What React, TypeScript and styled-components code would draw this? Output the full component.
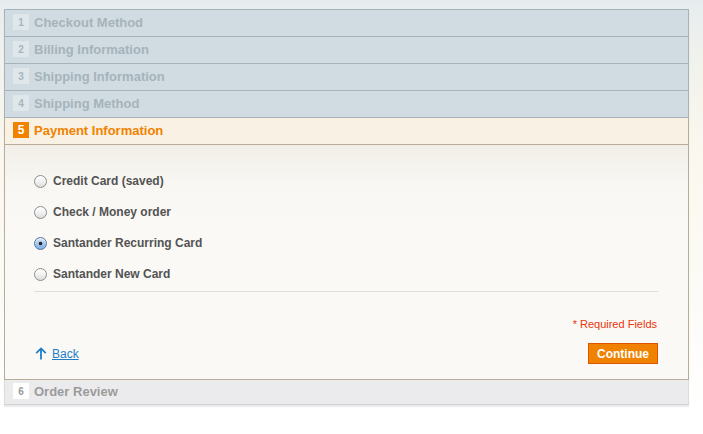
import React, { useState } from 'react'
import styled, { createGlobalStyle, css } from 'styled-components'

type Variant = 'done' | 'active' | 'pending'

const steps: { n: number; title: string; variant: Variant }[] = [
  { n: 1, title: 'Checkout Method', variant: 'done' },
  { n: 2, title: 'Billing Information', variant: 'done' },
  { n: 3, title: 'Shipping Information', variant: 'done' },
  { n: 4, title: 'Shipping Method', variant: 'done' },
  { n: 5, title: 'Payment Information', variant: 'active' },
  { n: 6, title: 'Order Review', variant: 'pending' },
]

const methods = [
  'Credit Card (saved)',
  'Check / Money order',
  'Santander Recurring Card',
  'Santander New Card',
]

export default function App() {
  const [method, setMethod] = useState(methods[2])

  return (
    <>
      <GlobalStyle />
      <Page>
        <Checkout>
          {steps.map((step) => (
            <Section key={step.n} variant={step.variant}>
              <StepHeader variant={step.variant}>
                <StepNumber variant={step.variant}>{step.n}</StepNumber>
                <StepTitle variant={step.variant}>{step.title}</StepTitle>
              </StepHeader>
              {step.variant === 'active' && (
                <StepBody>
                  <MethodList>
                    {methods.map((m) => (
                      <MethodItem key={m}>
                        <Radio
                          type="radio"
                          name="payment"
                          checked={method === m}
                          onChange={() => setMethod(m)}
                        />
                        <MethodLabel>{m}</MethodLabel>
                      </MethodItem>
                    ))}
                  </MethodList>
                  <Footer>
                    <Required>* Required Fields</Required>
                    <Actions>
                      <BackLink href="#">
                        <svg width="12" height="13" viewBox="0 0 12 13">
                          <path
                            d="M6 12.5V1.5M1.2 6.2L6 1.4l4.8 4.8"
                            fill="none"
                            stroke="#1e7ec8"
                            strokeWidth="1.8"
                          />
                        </svg>
                        <span>Back</span>
                      </BackLink>
                      <ContinueButton>Continue</ContinueButton>
                    </Actions>
                  </Footer>
                </StepBody>
              )}
            </Section>
          ))}
        </Checkout>
      </Page>
    </>
  )
}

const GlobalStyle = createGlobalStyle`
  html, body {
    margin: 0;
    padding: 0;
  }
  body {
    width: 703px;
    height: 434px;
    overflow: hidden;
    font-family: "Liberation Sans", Arial, sans-serif;
    background: linear-gradient(to bottom, #e6ecee 0px, #f1f2ec 60px, #fbf8ef 160px, #fcfbf7 300px, #ffffff 410px);
  }
`

const Page = styled.div`
  padding: 9px 0 0 4px;
`

const Checkout = styled.div`
  width: 685px;
  box-shadow: 0 2px 1px rgba(0, 0, 0, 0.08);
`

const Section = styled.div<{ variant: Variant }>`
  border: 1px solid #a6b3b9;
  border-top: none;
  &:first-child {
    border-top: 1px solid #a6b3b9;
  }
  ${({ variant }) =>
    variant === 'active' &&
    css`
      border-color: #b8ac9b;
    `}
  ${({ variant }) =>
    variant === 'pending' &&
    css`
      border-color: #dcdcdf;
      border-bottom-color: #d0d0d3;
    `}
`

const StepHeader = styled.div<{ variant: Variant }>`
  display: flex;
  align-items: center;
  box-sizing: border-box;
  height: 26px;
  padding: 0 0 2px 8px;
  background: ${({ variant }) =>
    variant === 'active' ? '#f9f1e3' : variant === 'pending' ? '#ebebed' : '#d0dce2'};
  ${({ variant }) =>
    variant === 'active' &&
    css`
      border-bottom: 1px solid #b8ac9b;
      height: 27px;
    `}
  ${({ variant }) =>
    variant === 'pending' &&
    css`
      height: 24px;
    `}
`

const StepNumber = styled.span<{ variant: Variant }>`
  display: flex;
  align-items: center;
  justify-content: center;
  width: 16px;
  height: 16px;
  font-size: 10px;
  font-weight: bold;
  background: ${({ variant }) =>
    variant === 'active' ? '#f18200' : variant === 'pending' ? '#ffffff' : '#dfe7eb'};
  color: ${({ variant }) =>
    variant === 'active' ? '#ffffff' : variant === 'pending' ? '#9a9a9a' : '#a7b5bc'};
  ${({ variant }) =>
    variant === 'active' &&
    css`
      font-size: 12px;
    `}
`

const StepTitle = styled.span<{ variant: Variant }>`
  margin-left: 5px;
  font-size: 13px;
  font-weight: bold;
  color: ${({ variant }) =>
    variant === 'active' ? '#f18200' : variant === 'pending' ? '#9b9b9b' : '#a6b3ba'};
`

const StepBody = styled.div`
  padding: 28px 30px 15px 29px;
  background: linear-gradient(to bottom, #f2efe8 0px, #f8f7f3 40px, #faf9f6 80px);
`

const MethodList = styled.div`
  display: flex;
  flex-direction: column;
  gap: 15px;
  padding-bottom: 9px;
  border-bottom: 1px solid #e2ddd4;
`

const MethodItem = styled.label`
  display: flex;
  align-items: center;
  gap: 6px;
  height: 16px;
`

const Radio = styled.input`
  appearance: none;
  margin: 0;
  width: 13px;
  height: 13px;
  border-radius: 50%;
  border: 1px solid #8d8d8d;
  background: linear-gradient(to bottom, #ffffff 0%, #f2f2f2 50%, #dcdcdc 100%);
  box-shadow: inset 0 1px 1px rgba(255, 255, 255, 0.8);

  &:checked {
    border-color: #52739e;
    background: radial-gradient(circle at 50% 50%, #2a2a2a 0 1.6px, transparent 2.1px),
      linear-gradient(to bottom, #d3e5f9 0%, #a5c8f0 50%, #7fb0ea 100%);
  }
`

const MethodLabel = styled.span`
  font-size: 12px;
  font-weight: bold;
  color: #535353;
`

const Footer = styled.div`
  display: flex;
  flex-direction: column;
  padding-top: 26px;
`

const Required = styled.p`
  margin: 0;
  align-self: flex-end;
  font-size: 11px;
  color: #eb340a;
  margin-right: 1px;
`

const Actions = styled.div`
  display: flex;
  justify-content: space-between;
  align-items: center;
  margin-top: 13px;
`

const BackLink = styled.a`
  display: flex;
  align-items: center;
  gap: 5px;
  margin-left: 1px;
  font-size: 12px;
  color: #1e7ec8;
  text-decoration: none;

  span {
    text-decoration: underline;
  }
`

const ContinueButton = styled.button`
  height: 21px;
  width: 70px;
  padding: 0;
  border: 1px solid #de5400;
  background: #f18200;
  color: #ffffff;
  font-family: "Liberation Sans", Arial, sans-serif;
  font-size: 12px;
  font-weight: bold;
  cursor: pointer;
`
